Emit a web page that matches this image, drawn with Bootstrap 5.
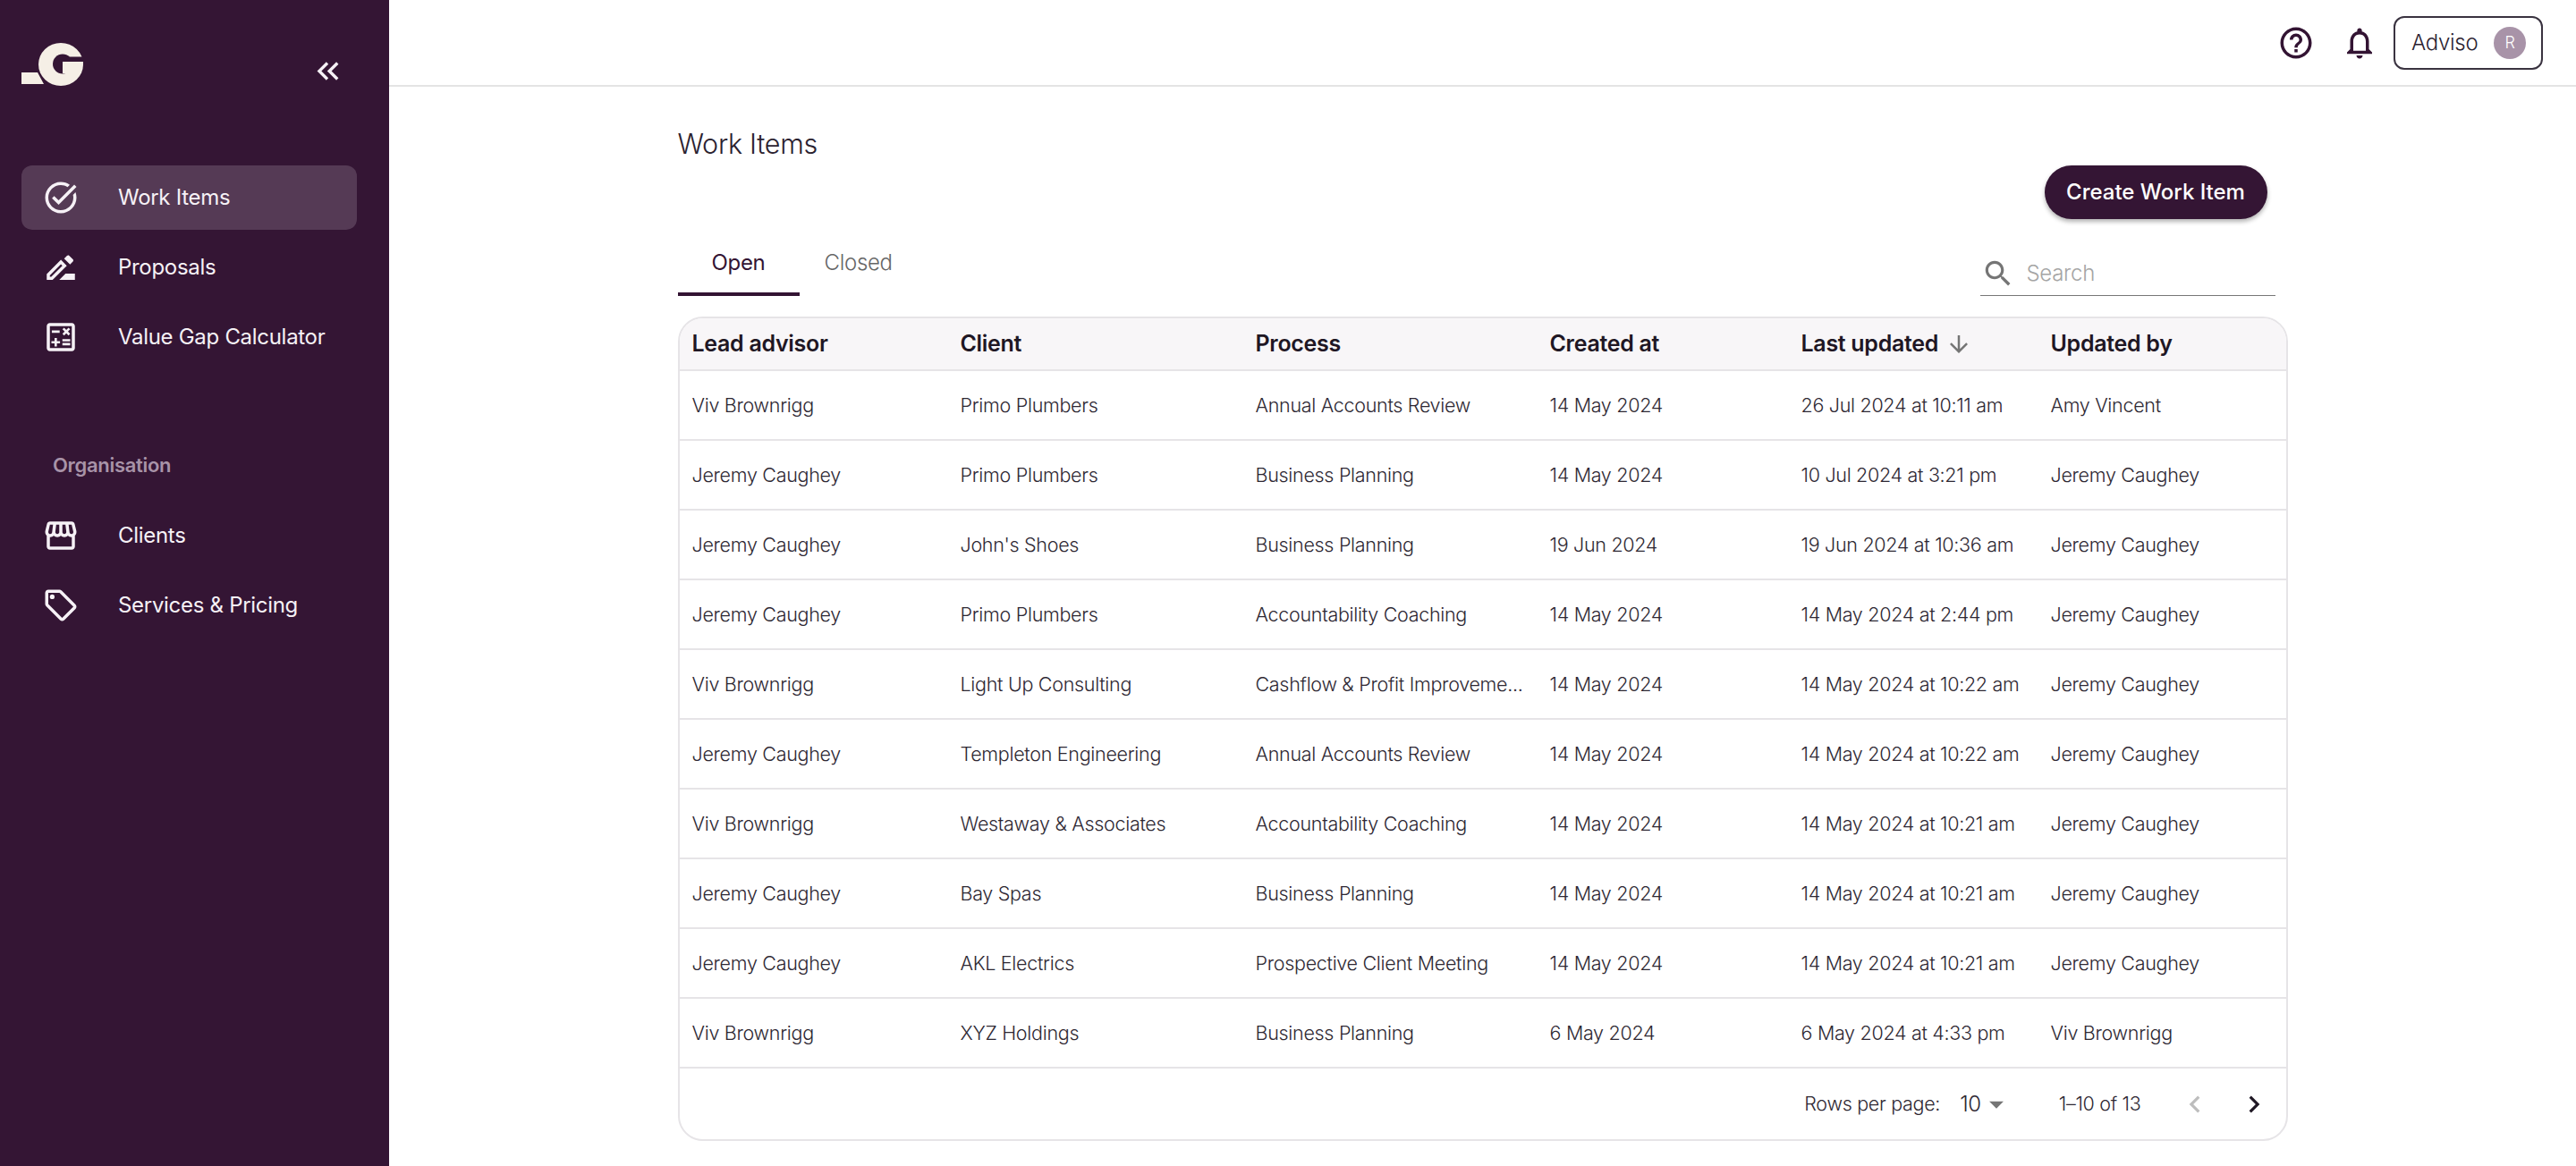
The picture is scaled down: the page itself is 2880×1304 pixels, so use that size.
<!DOCTYPE html>
<html lang="en">
<head>
<meta charset="utf-8">
<meta name="viewport" content="width=device-width, initial-scale=1">
<title>Work Items</title>
<link href="https://cdn.jsdelivr.net/npm/bootstrap@5.3.3/dist/css/bootstrap.min.css" rel="stylesheet">
<script src="https://cdn.jsdelivr.net/npm/bootstrap@5.3.3/dist/js/bootstrap.bundle.min.js"></script>
<style>
body { font-family: Inter, "Liberation Sans", sans-serif; color: #2b2230; background: #fff; min-height: 1304px; letter-spacing: -0.3px; }
.side-bar { width: 435px; min-height: 1304px; background: #341534; color: #fff; flex-shrink: 0; }
.logo-row { height: 185px; padding: 48px 0 0 24px; }
.logo-row .collapse-ico { width: 41px; height: 41px; fill: #f6f1f6; margin: 11px 0 0 252px; }
.nav-entry { height: 72px; margin: 0 36px 6px 24px; padding-left: 23px; border-radius: 12px; font-size: 24px; color: #f6f1f6; text-decoration: none; gap: 43px; }
.nav-entry.current { background: #553a55; }
.nav-entry svg { width: 42px; height: 42px; fill: #f6f1f6; flex-shrink: 0; }
.nav-head { color: #a893a8; font-size: 22px; font-weight: 600; padding-left: 59px; margin: 92px 0 28px; line-height: 30px; }
.top-strip { height: 97px; border-bottom: 2px solid #e4e4e4; padding-right: 37px; }
.top-ico { width: 42px; height: 42px; fill: #331433; }
.top-ico.help-ico { margin-right: 29px; }
.user-box { width: 167px; height: 60px; border: 2px solid #3a3340; border-radius: 12px; font-size: 24px; font-weight: 300; padding: 0 17px 0 18px; margin-left: 17px; }
.user-dot { width: 36px; height: 36px; border-radius: 50%; background: #a893a8; color: #fff; font-size: 18px; }
.content-wrap { width: 1800px; }
.page-title { font-size: 30.5px; font-weight: 300; margin: 40px 0 0; line-height: 48px; }
.btn-make { background: #341534; color: #fff; border: 0; border-radius: 30px; height: 60px; width: 249px; font-size: 24px; font-weight: 500; padding: 0; box-shadow: 0 3px 5px rgba(0,0,0,.3); }
.btn-make:hover { background: #341534; color: #fff; }
.make-row { padding-right: 23px; }
.tab-row { margin-top: 18px; }
.tab-entry { font-size: 24px; height: 68px; padding: 0 0 2px; color: #666; text-decoration: none; border-bottom: 4px solid transparent; font-weight: 300; }
.tab-entry.current { width: 136px; color: #331433; border-bottom-color: #331433; margin-right: 28px; font-weight: 400; }
.search-box { width: 330px; height: 50px; border-bottom: 1px solid #777; margin-right: 14px; gap: 13px; padding-left: 1px; }
.search-box svg { width: 38px; height: 38px; fill: #757575; }
.search-box input { border: 0; outline: 0; background: none; font-size: 24px; font-weight: 300; width: 260px; padding: 0; letter-spacing: inherit; }
.search-box input::placeholder { color: #a5a5a5; opacity: 1; }
.grid-frame { border: 2px solid #e6e4e7; border-radius: 28px; overflow: hidden; margin-top: 23px; }
.work-table { table-layout: fixed; margin: 0; font-size: 21.5px; }
.work-table th, .work-table td { padding: 0 12px 0 14px; border-bottom: 2px solid #e6e4e7; white-space: nowrap; overflow: hidden; text-overflow: ellipsis; color: #2e2833; vertical-align: middle; font-weight: 300; }
.work-table th:nth-child(1) { width: 300px; }
.work-table th:nth-child(2) { width: 330px; }
.work-table th:nth-child(3) { width: 329px; }
.work-table th:nth-child(4) { width: 281px; }
.work-table th:nth-child(5) { width: 279px; }
.work-table thead th { height: 58px; background: #f8f6f8; font-weight: 600; font-size: 25px; color: #1f1724; }
.work-table tbody td { height: 78px; }
.sort-ico { width: 30px; height: 30px; fill: #757575; margin-left: 2px; vertical-align: -7px; }
.pager-row { height: 79px; font-size: 21.5px; font-weight: 300; color: #2e2833; padding-right: 17px; }
.pager-row .pick { font-size: 24px; margin-left: 22px; }
.pager-row .pick svg { width: 38px; height: 38px; fill: #757575; margin-left: -2px; }
.pager-range { margin-left: 51px; margin-right: 41px; }
.pager-btn { width: 38px; height: 38px; }
.pager-btn.off { fill: #bdbdbd; }
.pager-btn.on { fill: #1f1724; margin-left: 28px; }
</style>
</head>
<body>
<div class="d-flex">
	<aside class="side-bar">
		<div class="logo-row d-flex align-items-start">
			<svg width="70" height="48" viewBox="0 0 70 48">
				<polygon points="0,33 18,33 25,46 0,46" fill="#f5efe6"/>
				<ellipse cx="44" cy="24" rx="25" ry="24" fill="#f5efe6"/>
				<circle cx="46" cy="23.5" r="11" fill="#341534"/>
				<rect x="46" y="15.5" width="24" height="5.5" fill="#341534"/>
				<polygon points="46,21 69,21 66.5,34 46,34" fill="#f5efe6"/>
			</svg>
			<svg class="collapse-ico" viewBox="0 0 24 24"><path d="M17.59 18L19 16.59 14.42 12 19 7.41 17.59 6l-6 6zM11 18l1.41-1.41L7.83 12l4.58-4.59L11 6l-6 6z"/></svg>
		</div>
		<a class="nav-entry current d-flex align-items-center" href="#">
			<svg viewBox="0 0 24 24"><path d="M22 5.18 10.59 16.6l-4.24-4.24 1.41-1.41 2.83 2.83 10-10L22 5.18zm-2.21 5.04c.13.57.21 1.17.21 1.78 0 4.42-3.58 8-8 8s-8-3.58-8-8 3.58-8 8-8c1.58 0 3.04.46 4.28 1.25l1.44-1.44C16.1 2.67 14.13 2 12 2 6.48 2 2 6.48 2 12s4.48 10 10 10 10-4.48 10-10c0-1.19-.22-2.33-.6-3.39l-1.61 1.61z"/></svg>
			Work Items
		</a>
		<a class="nav-entry d-flex align-items-center" href="#">
			<svg viewBox="0 0 24 24"><path d="M15 16l-4 4h10v-4h-6zm-2.94-8.81L3 16.25V20h3.75l9.06-9.06-3.75-3.75zM5.92 18H5v-.92l7.06-7.06.92.92L5.92 18zm13.79-9.71c.39-.39.39-1.02 0-1.41l-2.34-2.34c-.2-.2-.45-.29-.71-.29s-.51.1-.7.28l-1.83 1.83 3.75 3.75 1.83-1.82z"/></svg>
			Proposals
		</a>
		<a class="nav-entry d-flex align-items-center" href="#">
			<svg viewBox="0 0 24 24"><path d="M19 3H5c-1.1 0-2 .9-2 2v14c0 1.1.9 2 2 2h14c1.1 0 2-.9 2-2V5c0-1.1-.9-2-2-2zm0 16H5V5h14v14z"/><path d="M6.25 7.72h5v1.5h-5zM13 15.75h5v1.5h-5zM13 13.25h5v1.5h-5zM8 18h1.5v-2h2v-1.5h-2v-2H8v2H6V16h2zM14.09 10.95 15.5 9.54l1.41 1.41 1.06-1.06-1.41-1.42 1.41-1.41L16.91 6 15.5 7.41 14.09 6l-1.06 1.06 1.41 1.41-1.41 1.42z"/></svg>
			Value Gap Calculator
		</a>
		<div class="nav-head">Organisation</div>
		<a class="nav-entry d-flex align-items-center" href="#">
			<svg viewBox="0 0 24 24"><path d="M21.9 8.89l-1.05-4.37c-.22-.9-1-1.52-1.91-1.52H5.05c-.9 0-1.69.63-1.9 1.52L2.1 8.89c-.24 1.02-.02 2.06.62 2.88.08.11.19.19.28.29V19c0 1.1.9 2 2 2h14c1.1 0 2-.9 2-2v-6.94c.09-.09.2-.18.28-.28.64-.82.87-1.87.62-2.89zm-2.99-3.9l1.05 4.37c.1.42.01.84-.25 1.17-.14.18-.44.47-.94.47-.61 0-1.14-.49-1.21-1.14L16.98 5l1.93-.01zM13 5h1.96l.54 4.52c.05.39-.07.78-.33 1.07-.22.26-.54.41-.95.41-.67 0-1.22-.59-1.22-1.31V5zM8.49 9.52L9.04 5H11v4.69c0 .72-.55 1.31-1.29 1.31-.34 0-.65-.15-.89-.41-.25-.29-.37-.68-.33-1.07zm-4.45-.16L5.05 5h1.97l-.58 4.86c-.08.65-.6 1.14-1.21 1.14-.49 0-.8-.29-.93-.47-.27-.32-.36-.75-.26-1.17zM5 19v-6.03c.08.01.15.03.23.03.87 0 1.66-.36 2.24-.95.6.6 1.4.95 2.31.95.87 0 1.65-.36 2.23-.93.59.57 1.39.93 2.29.93.84 0 1.64-.35 2.24-.95.58.59 1.37.95 2.24.95.08 0 .15-.02.23-.03V19H5z"/></svg>
			Clients
		</a>
		<a class="nav-entry d-flex align-items-center" href="#">
			<svg viewBox="0 0 24 24"><path d="M21.41 11.41l-8.83-8.83C12.21 2.21 11.7 2 11.17 2H4c-1.1 0-2 .9-2 2v7.17c0 .53.21 1.04.59 1.41l8.83 8.83c.78.78 2.05.78 2.83 0l7.17-7.17c.78-.78.78-2.04-.01-2.83zM12.83 20L4 11.17V4h7.17L20 12.83 12.83 20z"/><circle cx="6.5" cy="6.5" r="1.5"/></svg>
			Services &amp; Pricing
		</a>
	</aside>

	<main class="flex-grow-1">
		<header class="top-strip d-flex align-items-center justify-content-end">
			<svg class="top-ico help-ico" viewBox="0 0 24 24"><path d="M11 18h2v-2h-2v2zm1-16C6.48 2 2 6.48 2 12s4.48 10 10 10 10-4.48 10-10S17.52 2 12 2zm0 18c-4.41 0-8-3.59-8-8s3.59-8 8-8 8 3.59 8 8-3.59 8-8 8zm0-14c-2.21 0-4 1.79-4 4h2c0-1.1.9-2 2-2s2 .9 2 2c0 2-3 1.75-3 5h2c0-2.25 3-2.5 3-5 0-2.21-1.79-4-4-4z"/></svg>
			<svg class="top-ico" viewBox="0 0 24 24"><path d="M12 22c1.1 0 2-.9 2-2h-4c0 1.1.9 2 2 2zm6-6v-5c0-3.07-1.63-5.64-4.5-6.32V4c0-.83-.67-1.5-1.5-1.5s-1.5.67-1.5 1.5v.68C7.64 5.36 6 7.92 6 11v5l-2 2v1h16v-1l-2-2zm-2 1H8v-6c0-2.48 1.51-4.5 4-4.5s4 2.02 4 4.5v6z"/></svg>
			<div class="user-box d-flex align-items-center justify-content-between">
				Adviso
				<span class="user-dot d-flex align-items-center justify-content-center">R</span>
			</div>
		</header>

		<div class="content-wrap mx-auto">
			<h1 class="page-title">Work Items</h1>
			<div class="make-row d-flex justify-content-end">
				<button type="button" class="btn btn-make">Create Work Item</button>
			</div>
			<div class="tab-row d-flex align-items-end justify-content-between">
				<div class="d-flex">
					<a class="tab-entry current d-flex align-items-center justify-content-center" href="#">Open</a>
					<a class="tab-entry d-flex align-items-center" href="#">Closed</a>
				</div>
				<div class="search-box d-flex align-items-center">
					<svg viewBox="0 0 24 24"><path d="M15.5 14h-.79l-.28-.27C15.41 12.59 16 11.11 16 9.5 16 5.91 13.09 3 9.5 3S3 5.91 3 9.5 5.91 16 9.5 16c1.61 0 3.09-.59 4.23-1.57l.27.28v.79l5 4.99L20.49 19l-4.99-5zm-6 0C7.01 14 5 11.99 5 9.5S7.01 5 9.5 5 14 7.01 14 9.5 11.99 14 9.5 14z"/></svg>
					<input type="text" placeholder="Search">
				</div>
			</div>

			<div class="grid-frame">
				<table class="table work-table">
					<thead>
						<tr>
							<th>Lead advisor</th>
							<th>Client</th>
							<th>Process</th>
							<th>Created at</th>
							<th>Last updated <svg class="sort-ico" viewBox="0 0 24 24"><path d="M20 12l-1.41-1.41L13 16.17V4h-2v12.17l-5.58-5.59L4 12l8 8 8-8z"/></svg></th>
							<th>Updated by</th>
						</tr>
					</thead>
					<tbody>
						<tr><td>Viv Brownrigg</td><td>Primo Plumbers</td><td>Annual Accounts Review</td><td>14 May 2024</td><td>26 Jul 2024 at 10:11 am</td><td>Amy Vincent</td></tr>
						<tr><td>Jeremy Caughey</td><td>Primo Plumbers</td><td>Business Planning</td><td>14 May 2024</td><td>10 Jul 2024 at 3:21 pm</td><td>Jeremy Caughey</td></tr>
						<tr><td>Jeremy Caughey</td><td>John's Shoes</td><td>Business Planning</td><td>19 Jun 2024</td><td>19 Jun 2024 at 10:36 am</td><td>Jeremy Caughey</td></tr>
						<tr><td>Jeremy Caughey</td><td>Primo Plumbers</td><td>Accountability Coaching</td><td>14 May 2024</td><td>14 May 2024 at 2:44 pm</td><td>Jeremy Caughey</td></tr>
						<tr><td>Viv Brownrigg</td><td>Light Up Consulting</td><td>Cashflow &amp; Profit Improveme...</td><td>14 May 2024</td><td>14 May 2024 at 10:22 am</td><td>Jeremy Caughey</td></tr>
						<tr><td>Jeremy Caughey</td><td>Templeton Engineering</td><td>Annual Accounts Review</td><td>14 May 2024</td><td>14 May 2024 at 10:22 am</td><td>Jeremy Caughey</td></tr>
						<tr><td>Viv Brownrigg</td><td>Westaway &amp; Associates</td><td>Accountability Coaching</td><td>14 May 2024</td><td>14 May 2024 at 10:21 am</td><td>Jeremy Caughey</td></tr>
						<tr><td>Jeremy Caughey</td><td>Bay Spas</td><td>Business Planning</td><td>14 May 2024</td><td>14 May 2024 at 10:21 am</td><td>Jeremy Caughey</td></tr>
						<tr><td>Jeremy Caughey</td><td>AKL Electrics</td><td>Prospective Client Meeting</td><td>14 May 2024</td><td>14 May 2024 at 10:21 am</td><td>Jeremy Caughey</td></tr>
						<tr><td>Viv Brownrigg</td><td>XYZ Holdings</td><td>Business Planning</td><td>6 May 2024</td><td>6 May 2024 at 4:33 pm</td><td>Viv Brownrigg</td></tr>
					</tbody>
				</table>
				<div class="pager-row d-flex align-items-center justify-content-end">
					<span>Rows per page:</span>
					<span class="pick d-flex align-items-center">10<svg viewBox="0 0 24 24"><path d="M7 10l5 5 5-5z"/></svg></span>
					<span class="pager-range">1–10 of 13</span>
					<svg class="pager-btn off" viewBox="0 0 24 24"><path d="M15.41 7.41 14 6l-6 6 6 6 1.41-1.41L10.83 12z"/></svg>
					<svg class="pager-btn on" viewBox="0 0 24 24"><path d="M10 6 8.59 7.41 13.17 12l-4.58 4.59L10 18l6-6z"/></svg>
				</div>
			</div>
		</div>
	</main>
</div>
</body>
</html>
